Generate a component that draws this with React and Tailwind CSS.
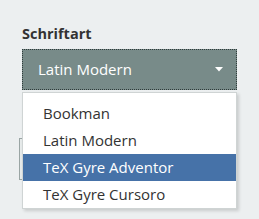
import React from "react";

const FONTS = ["Bookman", "Latin Modern", "TeX Gyre Adventor", "TeX Gyre Cursoro"];

export default function App() {
  const selected = "Latin Modern";
  const active = "TeX Gyre Adventor";

  return (
    <div className="w-[259px] h-[219px] overflow-hidden bg-[#eceff0] pl-[22px] pr-[22px] pt-[25px] font-['Open_Sans',sans-serif]">
      <div className="relative">
        <label className="block text-[14.5px] leading-[18px] font-bold text-[#333]">Schriftart</label>

        {/* Select */}
        <div className="mt-[6px] h-[41px] w-[215px] bg-[#788b89] border border-dotted border-[#2f3b3a] flex items-center justify-between pl-[15px] pr-[13px]">
          <span className="text-[15px] text-white">{selected}</span>
          <svg width="8" height="5" viewBox="0 0 8 5" className="fill-white">
            <path d="M0 0h8L4 4.5z" />
          </svg>
        </div>

        {/* Field underneath the open menu */}
        <div className="mt-[22px] text-[13px] leading-[16px] font-semibold text-[#e08a2a]">*</div>
        <div className="mt-[10px] h-[42px] w-[218px] -ml-[3px] border border-[#9aa5a4] bg-[#e6eaea]" />
        <div className="mt-[40px] h-[4px] w-[98px] ml-[1px] bg-[#d3d8d8]" />

        {/* Open menu */}
        <ul className="absolute left-0 top-[67px] w-[215px] bg-white border border-[#cfd4d4] shadow-[2px_2px_3px_rgba(0,0,0,0.15)] pt-[7px] pb-0">
          {FONTS.map((f) => (
            <li
              key={f}
              className={
                "h-[27px] flex items-center pl-[20px] text-[15px] " +
                (f === active ? "bg-[#4672a8] text-white" : "text-[#333]")
              }
            >
              {f}
            </li>
          ))}
        </ul>
      </div>
    </div>
  );
}
